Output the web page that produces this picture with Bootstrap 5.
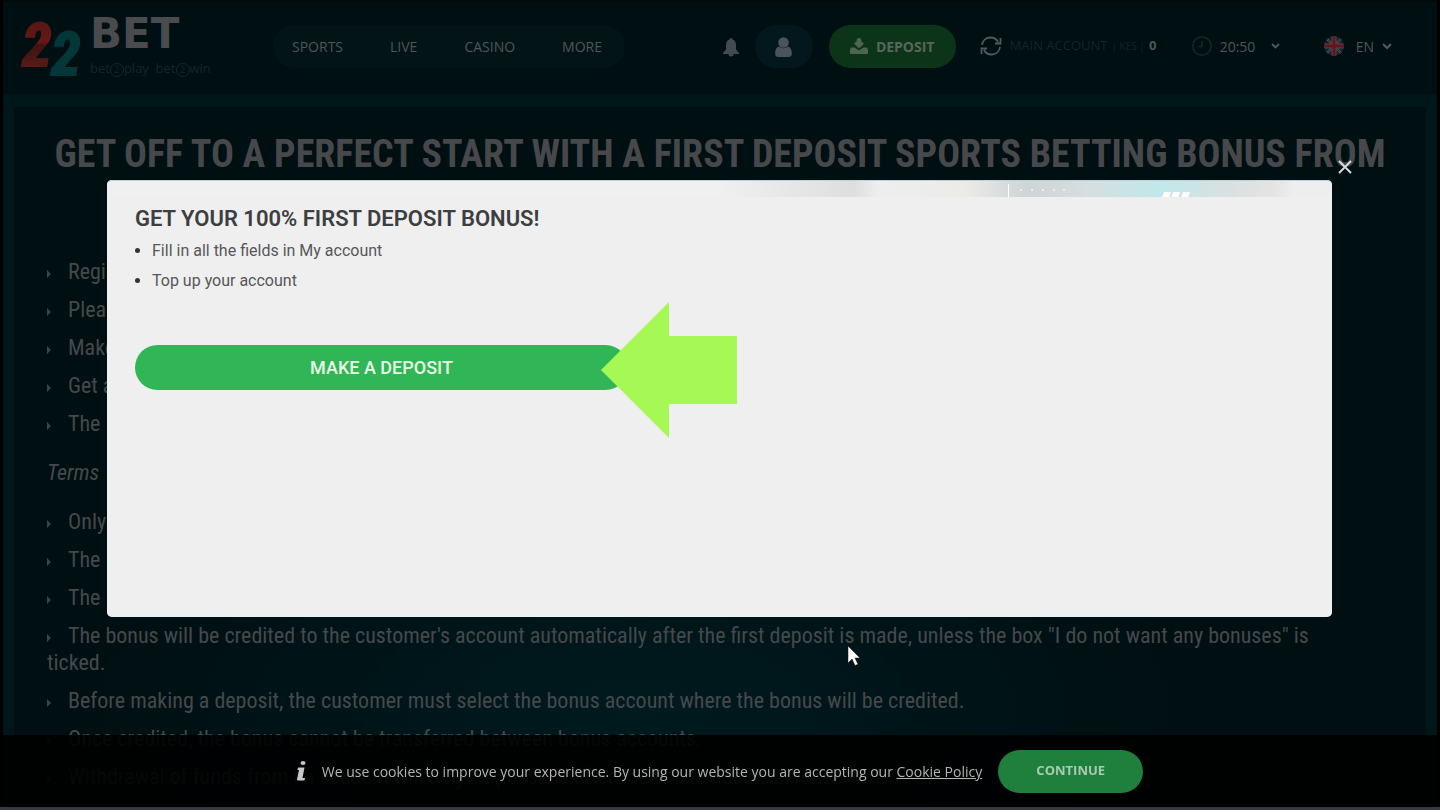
<!DOCTYPE html>
<html lang="en">
<head>
<meta charset="utf-8">
<meta name="viewport" content="width=device-width, initial-scale=1">
<title>22BET – First deposit bonus</title>
<link href="https://cdn.jsdelivr.net/npm/bootstrap@5.3.0/dist/css/bootstrap.min.css" rel="stylesheet">
<style>
  body { background: #00171a; color: #45494b; font-family: "Open Sans", sans-serif; border: solid #000; border-width: 0 3px; height: 100vh; overflow: hidden; }
  .bare { background: none; border: 0; padding: 0; }
  .topbar { background: #000f12; height: 94px; border-top: 2px solid #030a0a; padding: 0 45px 4px 19px; font-size: 14px; color: #505657; }
  .topbar a, .topbar button { color: inherit; }
  .brand-art { width: 60px; height: 62px; }
  .brand-word { font: 700 42px/34px "DejaVu Sans", sans-serif; color: #4a4b4f; }
  .brand-tag { font-size: 13px; line-height: 18px; color: #15262b; }
  .ring { display: inline-block; width: 14px; height: 14px; border: 1px solid; border-radius: 50%; font-size: 9px; line-height: 12px; text-align: center; vertical-align: middle; }
  .menu-pill { background: #031416; padding: 0 23px 0 19px; height: 43px; gap: 47px; }
  .brand-box { width: 251px; padding-top: 4px; }
  .user-pill { background: #02181d; width: 58px; height: 43px; }
  .dep-pill { background: #0b3419; width: 127px; height: 43px; font-weight: 700; }
  .dep-pill span { color: #58675b; }
  .acct { color: #172326; width: 188px; font-size: 13px; }
  .acct .kes { font-size: 10px; }
  .acct strong { color: #505657; }
  .clock-group { width: 132px; }
  .sheet { margin: 13px 11px 0; padding: 27px 33px 0; background: radial-gradient(ellipse 560px 250px at 44% 86%, #001a1e, #000f12); font-family: "Roboto Condensed", Roboto, sans-serif; font-size: 22px; line-height: 27px; height: calc(100vh - 107px); overflow: hidden; }
  .sheet h1 { font-size: 38px; font-weight: 700; line-height: 41px; color: #47484b; margin: 0 0 42px; }
  .sheet li { margin-bottom: 11px; padding-right: 30px; }
  .sheet li::before { content: ""; display: inline-block; border: solid transparent; border-width: 4px 0 4px 4px; border-left-color: #3b4447; margin-right: 17px; vertical-align: 1px; }
  .sheet p { margin: 22px 0; font-style: italic; }
  .cookies { background: rgba(0,0,0,.9); border-bottom: 3px solid #36393f; height: 75px; font-size: 14px; color: #b4b4b4; z-index: 1030; }
  .cookies a { color: inherit; }
  .cookies button { background: #1f7f3d; color: #a9cbb0; width: 145px; height: 43px; font-size: 13px; font-weight: 700; }
  .overlay { padding: 180px 108px 0 107px; z-index: 1040; pointer-events: none; }
  .promo { background: #efefef; border-radius: 5px; min-height: 437px; color: #55575a; font-family: Roboto, sans-serif; pointer-events: auto; box-shadow: inset 0 0 4px #e2f5f8; }
  .promo-strip { height: 17px; border-radius: 5px 5px 0 0; border-top: 1px solid #b9d4d6; background: linear-gradient(90deg, #f0f0f0 50%, #dedede 61%, #eee 63%, #ecebe8 70%, #cfd4d6 75%, #d7dedf 80%, #c0e8eb 86%, #d8e0e1 91%, #e4e3e2 95%, #eee 97%); }
  .promo-strip svg { left: 900px; top: 2px; }
  .promo-body { padding: 8px 28px; font-size: 16px; }
  .promo h2 { font-size: 22px; line-height: 28px; font-weight: 600; color: #3d3e41; margin: 0 0 3px; }
  .promo ul { padding-left: 17px; margin: 0 0 49px; }
  .promo li { line-height: 30px; }
  .promo li::marker { font-size: 16px; color: #333; }
  .cta { background: #30b557; color: #e8fbe5; width: 493px; height: 45px; font-size: 18px; font-weight: 500; }
  .arrow { left: 494px; top: 122px; }
  .close-x { right: -20px; top: -22px; }
  .cursor { left: 847px; top: 644px; z-index: 1050; }
</style>
</head>
<body class="position-relative">
<header class="topbar d-flex align-items-center">
  <a class="brand-box d-flex gap-2 text-decoration-none flex-shrink-0" href="#" aria-label="22BET">
    <svg class="brand-art overflow-visible" viewBox="0 0 60 62">
      <defs><linearGradient id="red" x2="0" y2="1"><stop stop-color="#4a1716"/><stop offset=".45" stop-color="#6a1716"/><stop offset=".5" stop-color="#401313"/><stop offset="1" stop-color="#66201b"/></linearGradient></defs>
      <g font-family="Roboto Condensed" font-weight="700" font-style="italic" font-size="60" stroke-width="2">
        <text x="29" y="58" fill="#04373a" stroke="#04373a">2</text>
        <text x="0" y="49" fill="url(#red)" stroke="url(#red)">2</text>
      </g>
    </svg>
    <span><span class="brand-word d-block">BET</span>
    <span class="brand-tag d-block text-nowrap mt-2">bet<span class="ring">2</span>play&nbsp; bet<span class="ring">2</span>win</span></span>
  </a>
  <nav class="menu-pill d-flex align-items-center rounded-pill">
    <a class="text-decoration-none" href="#">SPORTS</a>
    <a class="text-decoration-none" href="#">LIVE</a>
    <a class="text-decoration-none" href="#">CASINO</a>
    <a class="text-decoration-none" href="#">MORE</a>
  </nav>
  <div class="d-flex align-items-center ms-auto text-nowrap">
    <button class="bare me-3" aria-label="Notifications"><svg width="16" height="19" viewBox="0 0 16 19" fill="#424b4f"><path d="M8 0c1.200 0 1.500 1 1.500 1.500C12 2.200 13 4.500 13 7v4.500L16 15v1h-5.500a2.500 2.500 0 0 1-5 0H0v-1l3-3.500V7c0-2.500 1-4.800 3.500-5.500C6.500 1 6.800 0 8 0z"/></svg></button>
    <button class="bare user-pill rounded-pill me-3" aria-label="Profile"><svg width="17" height="20" viewBox="0 0 17 20" fill="#4a5459"><circle cx="8.500" cy="5.500" r="5.300"/><path d="M4 9.500c2.500 2.200 6.500 2.200 9 0 2.500.800 3.800 3 3.800 6V17c0 1.800-1.200 3-3 3H3.200c-1.800 0-3-1.200-3-3v-1.500c0-3 1.300-5.200 3.800-6z"/></svg></button>
    <button class="bare dep-pill rounded-pill d-flex align-items-center justify-content-center gap-2 me-4"><svg width="18" height="16" viewBox="0 0 18 16" fill="#506454"><path d="M6.500 3.500C6.500 1 7.500 0 9 0s2.500 1 2.500 3.500L14 5.500 9 10.500 4 5.500z"/><path d="M1 9.500h3.500L9 12.500l4.500-3H17l1 2v3.200c0 .800-.500 1.300-1.200 1.300H1.200C.500 16 0 15.500 0 14.700v-3.200z"/></svg><span>DEPOSIT</span></button>
    <span class="acct d-flex align-items-center"><svg class="me-2" width="22" height="20" viewBox="0 0 22 20" fill="none" stroke="#505b5e" stroke-width="1.800"><path d="M2 9C2.500 4.500 6 1.500 10.500 1.500c3.200 0 6 1.500 7.500 4.500M20.500 2v5.500H15M20 11c-.500 4.500-4 7.500-8.500 7.500-3.200 0-6-1.500-7.500-4.500M1.500 18v-5.500H7"/></svg>MAIN ACCOUNT <span class="kes mx-1">| KES |</span><strong>0</strong></span>
    <button class="bare clock-group d-flex align-items-center ms-4"><svg width="20" height="20" viewBox="0 0 20 20" fill="none" stroke="#1b292c" stroke-width="1.300"><circle cx="10" cy="10" r="9.200"/><path d="M10 5v5.500H6.500"/></svg><span class="ms-2 me-3">20:50</span><svg width="9" height="6" viewBox="0 0 9 6" fill="none" stroke="#505b5e" stroke-width="1.800"><path d="M1 1l3.500 3.500L8 1"/></svg></button>
    <button class="bare d-flex align-items-center gap-2"><svg width="20" height="20" viewBox="0 0 20 20"><defs><clipPath id="disc"><circle cx="10" cy="10" r="10"/></clipPath></defs><g clip-path="url(#disc)"><path fill="#14202f" d="M0 0h20v20H0z"/><path stroke="#454c52" stroke-width="2.500" d="M0 0l20 20M20 0L0 20"/><path stroke="#501719" stroke-width="1" d="M0 0l20 20M20 0L0 20"/><path stroke="#454c52" stroke-width="5" d="M10 0v20M0 10h20"/><path stroke="#651318" stroke-width="3" d="M10 0v20M0 10h20"/></g></svg><span class="ms-1">EN</span><svg width="10" height="7" viewBox="0 0 10 7" fill="none" stroke="#505b5e" stroke-width="2"><path d="M1 1l4 4 4-4"/></svg></button>
  </div>
</header>

<main class="sheet">
  <h1 class="text-center">GET OFF TO A PERFECT START WITH A FIRST DEPOSIT SPORTS BETTING BONUS FROM 22BET</h1>
  <ul class="list-unstyled m-0">
    <li>Register</li><li>Please</li><li>Make</li><li>Get a</li><li>The</li>
  </ul>
  <p>Terms</p>
  <ul class="list-unstyled m-0">
    <li>Only</li><li>The</li><li>The</li>
    <li>The bonus will be credited to the customer's account automatically after the first deposit is made, unless the box "I do not want any bonuses" is ticked.</li>
    <li>Before making a deposit, the customer must select the bonus account where the bonus will be credited.</li>
    <li>Once credited, the bonus cannot be transferred between bonus accounts.</li>
    <li>Withdrawal of funds from an account will only be possible after the bonus has been redeemed.</li>
  </ul>
</main>

<div class="overlay position-fixed top-0 start-0 w-100">
  <section class="promo position-relative" role="dialog" aria-labelledby="promo-title">
    <div class="promo-strip">
      <svg class="position-absolute" width="190" height="15" viewBox="0 0 190 15" fill="#fff"><path d="M1 2h1v13H1z"/><g opacity=".8"><circle cx="14" cy="8" r="1"/><circle cx="25" cy="8" r="1"/><circle cx="36" cy="8" r="1"/><circle cx="47" cy="8" r="1"/><circle cx="57" cy="8" r="1"/></g><path d="M157 10h7l-2 6h-7zM166 10h7l-2 6h-7zM176 10h7l-2 6h-7z"/></svg>
    </div>
    <div class="promo-body">
      <h2 id="promo-title">GET YOUR 100% FIRST DEPOSIT BONUS!</h2>
      <ul>
        <li>Fill in all the fields in My account</li>
        <li>Top up your account</li>
      </ul>
      <button class="bare cta rounded-pill">MAKE A DEPOSIT</button>
    </div>
    <svg class="arrow position-absolute" width="136" height="136" viewBox="0 0 136 136" fill="#a6f955"><path d="M0 68L68 0v34h68v68H68v34z"/></svg>
    <button class="close-x bare position-absolute lh-1" aria-label="Close"><svg width="14" height="14" viewBox="0 0 14 14" stroke="#d6dada" stroke-width="2"><path d="M1 1l12 12M13 1L1 13"/></svg></button>
  </section>
</div>

<footer class="cookies position-fixed bottom-0 start-0 w-100 d-flex align-items-center justify-content-center">
  <svg class="me-3" width="9" height="20" viewBox="0 0 9 20" fill="#c8c8c8"><ellipse cx="6" cy="2" rx="2.500" ry="2"/><path d="M1 6.500h6.500L5.500 17H8l-.500 2.500H1c-1 0-1-1-.800-2L2 9H.500z"/></svg>
  <span>We use cookies to improve your experience. By using our website you are accepting our <a href="#">Cookie Policy</a></span>
  <button class="bare rounded-pill ms-3">CONTINUE</button>
</footer>

<svg class="cursor position-fixed" width="14" height="22" viewBox="0 0 14 22"><path fill="#fff" stroke="#111" stroke-width=".500" d="M1 2v17l4-4 3 6.500 3-1.300-3-6.200h5z"/></svg>
<script src="https://cdn.jsdelivr.net/npm/bootstrap@5.3.0/dist/js/bootstrap.bundle.min.js"></script>
</body>
</html>
